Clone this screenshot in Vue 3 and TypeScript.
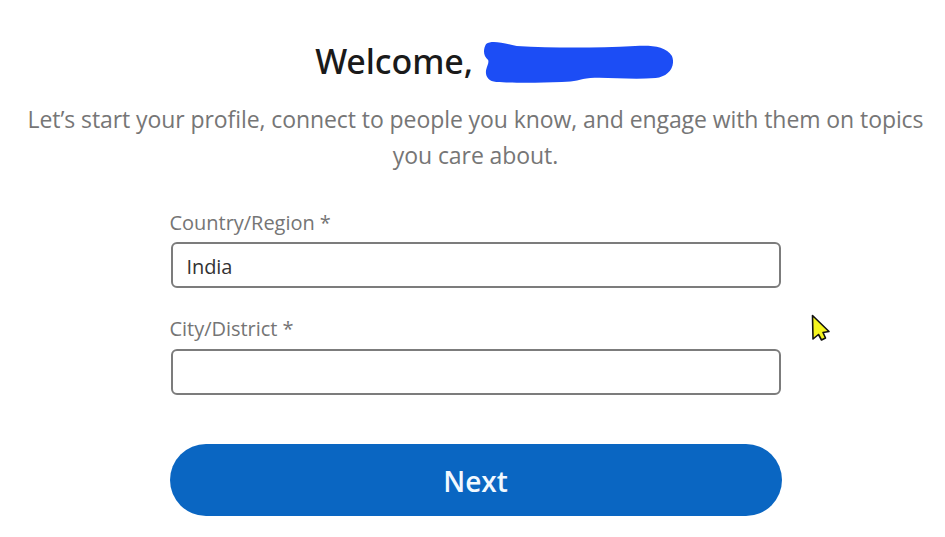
<script setup lang="ts">
const title = 'Welcome,'
const intro = 'Let’s start your profile, connect to people you know, and engage with them on topics you care about.'
const fields = [
  { label: 'Country/Region *', value: 'India' },
  { label: 'City/District *', value: '' },
]
</script>

<template>
  <main class="page">
    <h1 class="title">
      <span>{{ title }}</span>
      <svg class="scribble" width="191" height="42" viewBox="0 0 187 42" preserveAspectRatio="none" aria-hidden="true">
        <path d="M4 3 C10 -1 20 2 34 5 C70 7 110 7 150 5 C165 4 180 5 186 15 C190 26 182 36 170 37 C145 39 125 36 106 37 C95 38 92 41 78 41 C55 42 30 42 14 41 C6 40 3 35 4 29 C5 24 7 22 6 19 C1 15 1 8 4 3 Z" fill="#1c4df5" />
      </svg>
    </h1>
    <p class="intro">{{ intro }}</p>
    <form class="form" @submit.prevent>
      <div v-for="field in fields" :key="field.label" class="field">
        <label class="label">{{ field.label }}</label>
        <div class="input">{{ field.value }}</div>
      </div>
      <button class="next" type="submit">Next</button>
    </form>
    <svg class="cursor" width="20" height="28" viewBox="0 0 20 28" aria-hidden="true">
      <path d="M1.5 1.5 L18 17.5 L12 18.5 L14.5 24 L10.5 26 L7.5 20.5 L2 25 Z" fill="#f5f51e" stroke="#111" stroke-width="1.6" stroke-linejoin="round" />
    </svg>
  </main>
</template>

<style scoped>
.page {
  position: relative;
  width: 945px;
  height: 537px;
  overflow: hidden;
  box-sizing: border-box;
  padding: 40px 0 0 6px;
  background: #fff;
  font-family: "Open Sans", "Noto Sans", sans-serif;
  display: flex;
  flex-direction: column;
  align-items: center;
}
.title {
  margin: 0 0 0 37px;
  height: 42px;
  display: flex;
  align-items: center;
  gap: 9px;
  font-family: "Noto Sans", "Open Sans", sans-serif;
  font-size: 34px;
  line-height: 42px;
  font-weight: 500;
  color: #1a1a1a;
  letter-spacing: -0.1px;
}
.scribble {
  margin-top: 2px;
}
.intro {
  width: 900px;
  margin: 19px 0 0;
  text-align: center;
  font-size: 23px;
  line-height: 36px;
  color: #767676;
  letter-spacing: -0.08px;
}
.form {
  width: 612px;
  margin-top: 36px;
  display: flex;
  flex-direction: column;
}
.field {
  display: flex;
  flex-direction: column;
  margin-bottom: 27px;
}
.field:nth-child(2) {
  margin-bottom: 49px;
}
.label {
  font-size: 20px;
  line-height: 28px;
  color: #757575;
  letter-spacing: -0.03px;
  margin-bottom: 5px;
}
.field + .field .label {
  margin-bottom: 6px;
}
.input {
  box-sizing: border-box;
  height: 46px;
  width: 610px;
  margin-left: 1px;
  padding: 0 14px;
  border: 2px solid #7c7c7c;
  border-radius: 6px;
  font-size: 20px;
  line-height: 46px;
  color: #333;
  letter-spacing: -0.1px;
}
.next {
  height: 72px;
  padding: 2px 0 0;
  border: 0;
  border-radius: 36px;
  background: #0a66c2;
  color: #f2f9ff;
  font-family: inherit;
  font-size: 28px;
  font-weight: 600;
  letter-spacing: 0;
}
.cursor {
  position: absolute;
  left: 811px;
  top: 314px;
}
</style>
